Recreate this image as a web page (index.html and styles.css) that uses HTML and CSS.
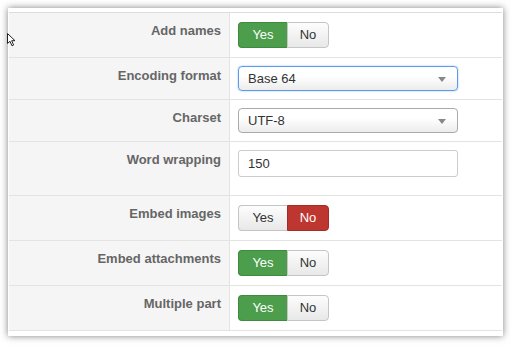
FILE: index.html
```html
<html>
<head>
<meta content="text/html;charset=utf-8" http-equiv="Content-Type" />
<link rel="stylesheet" href="styles.css">
</head>
<body>
<div class="panel">
	<div class="form">
		<div class="row">
			<div class="label">Add names</div>
			<div class="field">
				<div class="toggle">
					<span class="btn yes on-green">Yes</span><span class="btn no">No</span>
				</div>
			</div>
		</div>
		<div class="row short">
			<div class="label">Encoding format</div>
			<div class="field tight">
				<div class="select focus"><span>Base 64</span><i class="caret"></i></div>
			</div>
		</div>
		<div class="row short">
			<div class="label">Charset</div>
			<div class="field tight">
				<div class="select"><span>UTF-8</span><i class="caret"></i></div>
			</div>
		</div>
		<div class="row tall">
			<div class="label">Word wrapping</div>
			<div class="field tight">
				<input class="text" value="150" />
			</div>
		</div>
		<div class="row">
			<div class="label">Embed images</div>
			<div class="field">
				<div class="toggle">
					<span class="btn yes">Yes</span><span class="btn no on-red">No</span>
				</div>
			</div>
		</div>
		<div class="row">
			<div class="label">Embed attachments</div>
			<div class="field">
				<div class="toggle">
					<span class="btn yes on-green">Yes</span><span class="btn no">No</span>
				</div>
			</div>
		</div>
		<div class="row">
			<div class="label">Multiple part</div>
			<div class="field">
				<div class="toggle">
					<span class="btn yes on-green">Yes</span><span class="btn no">No</span>
				</div>
			</div>
		</div>
	</div>
</div>
<!-- mouse pointer caught in the screenshot -->
<svg class="pointer" width="9" height="14" viewBox="0 0 9 14">
	<path d="M0.5 0.5 L0.5 10.5 L3 8.3 L5 12.8 L6.6 12 L4.7 7.7 L8 7.7 Z" fill="#fff" stroke="#222" stroke-width="1" />
</svg>
</body>
</html>
```
FILE: styles.css
```css
body {
	margin:0;
	padding:0;
	background-color:#fff;
	font-family:"Liberation Sans", Arial, Helvetica, sans-serif;
	font-size:13px;
	color:#333;
	overflow:hidden;
}

.panel {
	margin:8px 0 0 8px;
	width:495px;
	height:328px;
	padding:4px 0 0 1px;
	box-sizing:border-box;
	background-color:#fff;
	box-shadow:0 0 7px rgba(0,0,0,0.5);
}

.form {
	width:493px;
	border-top:1px solid #ddd;
}

.row {
	display:flex;
	height:44px;
	border-bottom:1px solid #e3e3e3;
}
.row.short {
	height:41px;
}
.row.tall {
	height:53px;
}

.label {
	width:212px;
	padding:9px 8px 0 0;
	text-align:right;
	line-height:18px;
	font-weight:bold;
	color:#666;
	background-color:#f5f5f5;
	border-right:1px solid #e3e3e3;
}

.field {
	flex:1;
	padding:9px 0 0 8px;
}
.field.tight {
	padding-top:8px;
}

.toggle {
	display:flex;
	height:26px;
}
.btn {
	box-sizing:border-box;
	height:26px;
	line-height:24px;
	text-align:center;
	color:#333;
	border:1px solid #c5c5c5;
	background:linear-gradient(#fdfdfd, #e8e8e8);
}
.btn.yes {
	width:49px;
	border-radius:4px 0 0 4px;
	border-right:none;
}
.btn.no {
	width:42px;
	border-radius:0 4px 4px 0;
}
.btn.on-green {
	color:#fff;
	background:#4c9d4c;
	border-color:#3f8a3f;
}
.btn.on-red {
	color:#fff;
	background:#bd362f;
	border-color:#a52c26;
}

.select {
	position:relative;
	box-sizing:border-box;
	width:220px;
	height:25px;
	line-height:23px;
	padding-left:9px;
	border:1px solid #aaa;
	border-radius:4px;
	background:linear-gradient(#fff 40%, #ececec);
	color:#333;
}
.select.focus {
	border-color:#5b9be8;
	box-shadow:0 0 2px rgba(82,150,230,0.6);
}
.caret {
	position:absolute;
	right:11px;
	top:10px;
	width:0;
	height:0;
	border-left:4px solid transparent;
	border-right:4px solid transparent;
	border-top:5px solid #888;
}

.text {
	box-sizing:border-box;
	width:220px;
	height:27px;
	padding:0 9px;
	margin:0;
	border:1px solid #ccc;
	border-radius:3px;
	font-family:"Liberation Sans", Arial, Helvetica, sans-serif;
	font-size:13px;
	color:#333;
	outline:none;
}

.pointer {
	position:absolute;
	left:7px;
	top:33px;
}
```
